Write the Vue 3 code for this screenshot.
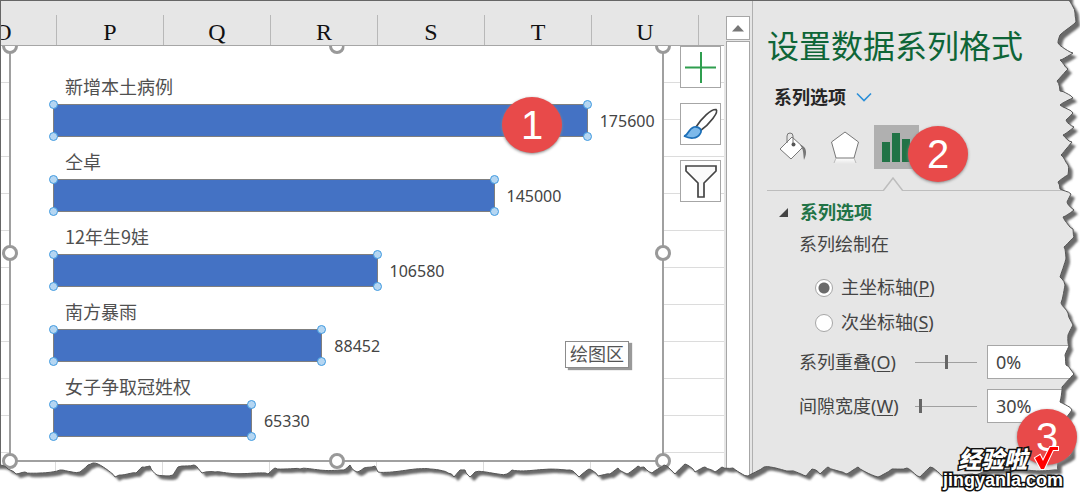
<script setup>
import { ref } from 'vue'

const columns = ['O', 'P', 'Q', 'R', 'S', 'T', 'U']
const axisMax = 200000
const series = [
  { name: '新增本土病例', value: 175600 },
  { name: '仝卓', value: 145000 },
  { name: '12年生9娃', value: 106580 },
  { name: '南方暴雨', value: 88452 },
  { name: '女子争取冠姓权', value: 65330 }
]
const axis = ref('primary')
const overlap = ref('0%')
const gap = ref('30%')
const overlapPos = ref(50)
const gapPos = ref(6)

// Torn paper outline: right side downwards, then the bottom side leftwards.
const right = [
  [1069, 0], [1075, 13], [1076, 22], [1060, 35], [1058, 43], [1073, 53], [1060, 60], [1068, 69],
  [1057, 81], [1060, 91], [1073, 98], [1060, 105], [1073, 113], [1066, 120], [1074, 127], [1063, 135],
  [1072, 142], [1061, 155], [1068, 165], [1068, 175], [1058, 182], [1060, 189], [1071, 194], [1067, 202],
  [1074, 210], [1063, 217], [1073, 229], [1074, 237], [1064, 247], [1066, 258], [1060, 277], [1065, 285],
  [1061, 303], [1068, 313], [1073, 325], [1068, 335], [1069, 346], [1065, 355], [1066, 365], [1074, 374],
  [1062, 387], [1060, 402], [1072, 410], [1066, 418], [1071, 430], [1071, 455], [1058, 462], [1058, 470]
]
const bottom = [
  [0, 465], [8, 469], [16, 474], [25, 472], [40, 473], [60, 470], [80, 472], [88, 465], [93, 463],
  [98, 464], [115, 477], [122, 475], [136, 473], [142, 467], [150, 466], [157, 475], [173, 475],
  [178, 467], [194, 465], [202, 473], [215, 472], [268, 474], [275, 468], [300, 469], [344, 470],
  [350, 465], [357, 472], [364, 468], [375, 466], [378, 472], [430, 469], [448, 473], [454, 477],
  [460, 470], [465, 470], [470, 477], [475, 472], [507, 474], [512, 470], [570, 470], [579, 477],
  [589, 469], [598, 476], [610, 474], [618, 468], [627, 474], [638, 466], [644, 467], [652, 473],
  [664, 465], [675, 474], [685, 464], [695, 472], [705, 467], [715, 472], [722, 467], [733, 468],
  [748, 476], [764, 467], [790, 471], [806, 476], [812, 469], [820, 474], [828, 467], [846, 474],
  [858, 467], [878, 477], [892, 469], [907, 468], [920, 477], [930, 467], [942, 476], [952, 475],
  [975, 475], [990, 470]
]
function rough(points) {
  const out = []
  for (let i = 0; i < points.length - 1; i++) {
    const [x1, y1] = points[i]
    const [x2, y2] = points[i + 1]
    const n = Math.max(1, Math.round(Math.hypot(x2 - x1, y2 - y1) / 3))
    for (let k = 0; k < n; k++) {
      const a = k ? Math.sin((i * 17 + k) * 12.9) : 0
      out.push([(x1 + ((x2 - x1) * k) / n + a * 0.6).toFixed(1), (y1 + ((y2 - y1) * k) / n - a * 0.9).toFixed(1)])
    }
  }
  out.push(points[points.length - 1])
  return out
}
const edge = 'M' + rough([...right, ...[...bottom].reverse()]).map((p) => p.join(' ')).join('L')
const sheetShape = edge + 'L-20 465L-20 -20L1069 -20Z'
const outside = edge + 'L0 496L1080 496L1080 0Z'
</script>

<template>
  <main class="page">
    <div class="window">
      <section class="sheet">
        <div class="headers">
          <span v-for="c in columns" :key="c" class="col">{{ c }}</span>
        </div>
        <div class="cells">
          <div class="chart">
            <i class="handle tl"></i><i class="handle tc"></i><i class="handle tr"></i>
            <i class="handle ml"></i><i class="handle mr"></i>
            <i class="handle bl"></i><i class="handle bc"></i><i class="handle br"></i>
            <ul class="series">
              <li v-for="s in series" :key="s.name">
                <span class="name">{{ s.name }}</span>
                <div class="row">
                  <div class="bar" :style="{ width: (s.value / axisMax) * 100 + '%' }">
                    <i class="dot a"></i><i class="dot b"></i><i class="dot c"></i><i class="dot d"></i>
                  </div>
                  <span class="value">{{ s.value }}</span>
                </div>
              </li>
            </ul>
            <span class="badge one">1</span>
            <div class="tip" role="tooltip">绘图区</div>
          </div>
          <div class="tools">
            <button type="button" class="tool" aria-label="图表元素">
              <svg width="38" height="38" viewBox="0 0 38 38"><path d="M19 4v31M3 19.500h31" stroke="#2f9e4f" stroke-width="2" /></svg>
            </button>
            <button type="button" class="tool" aria-label="图表样式">
              <svg width="38" height="38" viewBox="0 0 38 38">
                <path d="M14 22C20 13 29 4 34 4.500C37 7 28 19 18 26Z" fill="#fff" stroke="#444" stroke-width="1.700" />
                <path d="M2 31C6 31 6 24 12 22C17 21 21 25 18 29C15 34 8 34 2 31Z" fill="#7db9ea" stroke="#1c6fb8" stroke-width="1.700" />
              </svg>
            </button>
            <button type="button" class="tool" aria-label="图表筛选器">
              <svg width="38" height="38" viewBox="0 0 38 38"><path d="M4 4H34V9L22 21V35H16V21L4 9Z" fill="#fafafa" stroke="#444" stroke-width="1.700" /></svg>
            </button>
          </div>
        </div>
      </section>

      <div class="scroll">
        <button type="button" class="up" aria-label="向上滚动">
          <svg width="12" height="7" viewBox="0 0 12 7"><path d="M0 6.500L6 0L12 6.500Z" fill="#777" /></svg>
        </button>
        <div class="track"></div>
      </div>

      <aside class="pane">
        <h1>设置数据系列格式</h1>
        <button type="button" class="picker">
          系列选项
          <svg width="16" height="10" viewBox="0 0 16 10"><path d="M1 1.500L8 8.500L15 1.500" fill="none" stroke="#2b8fd8" stroke-width="1.600" /></svg>
        </button>
        <div class="tabs">
          <button type="button" class="tab" aria-label="填充与线条">
            <svg width="30" height="32" viewBox="0 0 30 32">
              <path d="M2 18L14 6L25 16L13 28Z" fill="#fff" stroke="#777" />
              <path d="M9 12V5Q9 2 12 2Q15 2 15 5V13" fill="none" stroke="#777" />
              <circle cx="15.500" cy="13.500" r="2" fill="#555" />
              <path d="M22 14C28 15 30 21 26 29C25 23 26 19 22 14Z" fill="#777" />
            </svg>
          </button>
          <button type="button" class="tab" aria-label="效果">
            <svg width="30" height="34" viewBox="0 0 30 34">
              <defs><linearGradient id="fade" x1="0" y1="0" x2="0" y2="1"><stop offset="0" stop-color="#fff" /><stop offset="1" stop-color="#fff" stop-opacity="0" /></linearGradient></defs>
              <path d="M6 28H24L26 34H4Z" fill="url(#fade)" />
              <path d="M15 2L28.500 12L24 28H6L1.500 12Z" fill="#fff" stroke="#777" />
              <path d="M6 28L4 33M24 28L26 33" stroke="#bbb" />
            </svg>
          </button>
          <button type="button" class="tab selected" aria-label="系列选项">
            <svg width="29" height="30" viewBox="0 0 29 30"><path d="M0 10H8V30H0ZM10 1H18V30H10ZM20 7H28V30H20Z" fill="#217346" /></svg>
          </button>
          <span class="badge two">2</span>
        </div>
        <div class="divider">
          <svg width="20" height="14" viewBox="0 0 20 14"><path d="M0 14L10 1L20 14" fill="#e6e6e6" stroke="#bdbdbd" stroke-width="1.500" /></svg>
        </div>
        <h2>
          <svg width="9" height="9" viewBox="0 0 9 9"><path d="M9 0V9H0Z" fill="#444" /></svg>
          系列选项
        </h2>
        <fieldset>
          <legend>系列绘制在</legend>
          <label class="radio"><input v-model="axis" type="radio" name="axis" value="primary" /><span>主坐标轴(<u>P</u>)</span></label>
          <label class="radio"><input v-model="axis" type="radio" name="axis" value="secondary" /><span>次坐标轴(<u>S</u>)</span></label>
        </fieldset>
        <div class="setting">
          <label for="overlap">系列重叠(<u>O</u>)</label>
          <input v-model="overlapPos" type="range" min="0" max="100" aria-label="系列重叠滑块" />
          <input id="overlap" v-model="overlap" type="text" />
        </div>
        <div class="setting">
          <label for="gap">间隙宽度(<u>W</u>)</label>
          <input v-model="gapPos" type="range" min="0" max="100" aria-label="间隙宽度滑块" />
          <input id="gap" v-model="gap" type="text" />
        </div>
      </aside>
    </div>

    <svg class="torn" viewBox="0 0 1080 496" preserveAspectRatio="none" aria-hidden="true">
      <defs>
        <clipPath id="out"><path :d="outside" /></clipPath>
        <filter id="soft" x="-5%" y="-5%" width="110%" height="110%"><feGaussianBlur stdDeviation="1" /></filter>
      </defs>
      <path :d="outside" fill="#fff" />
      <g clip-path="url(#out)">
        <path :d="sheetShape" fill="#6a6a6a" filter="url(#soft)" transform="translate(4 4)" />
      </g>
      <path :d="edge" fill="none" stroke="#555" stroke-width="1" />
    </svg>
    <span class="badge three">3</span>
    <div class="mark">
      <div class="brand">
        经验啦
        <svg width="26" height="26" viewBox="0 0 26 26">
          <path d="M2 13L7 10L10 16L17 2H25V5H20L11 24H8Z" fill="#f00" stroke="#fff" stroke-width="2" paint-order="stroke" />
        </svg>
      </div>
      <div class="site">jingyanla.com</div>
    </div>
  </main>
</template>

<style>
body {
  margin: 0;
  background: #fff;
}
</style>

<style scoped>
* {
  box-sizing: border-box;
}
.page {
  position: relative;
  overflow: hidden;
  padding-bottom: 14px;
  font-family: "Noto Sans", "Noto Sans CJK SC", sans-serif;
  color: #444;
}
button {
  padding: 0;
  border: 0;
  background: none;
  font: inherit;
  color: inherit;
}
.window {
  display: flex;
  border-top: 1px solid #666;
  border-left: 1px solid #666;
  background: #e6e6e6;
}
.sheet {
  flex: 1;
  min-width: 0;
  display: flex;
  flex-direction: column;
}
.headers {
  display: flex;
  height: 45px;
  padding-top: 14px;
  margin-right: 2px;
  border-bottom: 1px solid #a6a6a6;
  overflow: hidden;
}
.col {
  flex: none;
  width: 107px;
  border-right: 1px solid #b8b8b8;
  text-align: center;
  font: 24px/34px "Liberation Serif", serif;
  color: #111;
}
.col:first-child {
  margin-left: -51px;
}
.cells {
  flex: 1;
  display: flex;
  padding: 0 0 20px 8px;
  background:
    repeating-linear-gradient(to bottom, transparent 0 36px, #dcdcdc 36px 37px),
    repeating-linear-gradient(to right, transparent 0 106px, #dcdcdc 106px 107px) -52px 0,
    #fff;
  margin-right: 2px;
  overflow: hidden;
}
.chart {
  position: relative;
  flex: 1;
  padding: 28px 0 23px 42px;
  border: solid #a0a0a0;
  border-width: 0 2px 2px 2px;
  background: #fff;
}
.handle {
  position: absolute;
  width: 16px;
  height: 16px;
  border: 3px solid #999;
  border-radius: 50%;
  background: #fff;
}
.tl, .tc, .tr {
  top: -8px;
  clip-path: inset(8px 0 0 0);
}
.ml, .mr {
  top: calc(50% - 8px);
}
.bl, .bc, .br {
  bottom: -9px;
}
.tl, .ml, .bl {
  left: -9px;
}
.tr, .mr, .br {
  right: -9px;
}
.tc, .bc {
  left: calc(50% - 8px);
}
.series {
  display: grid;
  gap: 12px;
  margin: 0;
  padding: 0;
  list-style: none;
}
.name {
  display: block;
  padding-left: 12px;
  margin-bottom: 6px;
  font: 18px/24px "Noto Sans CJK SC", sans-serif;
  color: #505050;
}
.row {
  display: flex;
  align-items: center;
  gap: 12px;
}
.bar {
  position: relative;
  height: 33px;
  border: 1px solid #7f7f7f;
  background: #4472c4;
}
.dot {
  position: absolute;
  width: 9px;
  height: 9px;
  border: 1px solid #419be0;
  border-radius: 50%;
  background: #b5d6f2;
}
.a, .b {
  left: -5px;
}
.c, .d {
  right: -5px;
}
.a, .c {
  top: -5px;
}
.b, .d {
  bottom: -5px;
}
.value {
  font-size: 16px;
  line-height: 24px;
}
.badge {
  position: absolute;
  width: 60px;
  height: 56px;
  border-radius: 50%;
  background: #e84a4a;
  box-shadow: 0 1px 3px #888;
  color: #fff;
  text-align: center;
  font: 40px/56px "Liberation Sans", sans-serif;
}
.one {
  top: 51px;
  right: 100px;
}
.tip {
  position: absolute;
  right: 33px;
  bottom: 92px;
  padding: 0 4px;
  border: 1px solid #8c8c8c;
  background: #fff;
  box-shadow: 3px 2px 1px #999;
  font-size: 18px;
  line-height: 25px;
  color: #555;
}
.tools {
  display: flex;
  flex-direction: column;
  gap: 15px;
  width: 60px;
  padding-left: 16px;
}
.tool {
  display: grid;
  place-items: center;
  width: 41px;
  height: 42px;
  border: 1px solid #a6a6a6;
  background: #fff;
}
.scroll {
  display: flex;
  flex-direction: column;
  gap: 1px;
  width: 24px;
  padding-top: 15px;
}
.up {
  display: grid;
  place-items: center;
  height: 24px;
  border: 1px solid #a6a6a6;
  background: #fff;
}
.track {
  flex: 1;
  border: 1px solid #a6a6a6;
  background: #fff;
}
.pane {
  width: 328px;
  margin-left: 2px;
  padding: 20px 0 0 14px;
  border-left: 1px solid #b0b0b0;
}
h1 {
  margin: 0;
  font-size: 32px;
  line-height: 50px;
  font-weight: 400;
  color: #0e6537;
}
.picker {
  display: flex;
  align-items: center;
  gap: 10px;
  margin: 12px 0 14px 7px;
  font-size: 18px;
  line-height: 28px;
  font-weight: 700;
  color: #262626;
}
.tabs {
  position: relative;
  display: flex;
  align-items: center;
  gap: 7px;
  height: 44px;
  padding-left: 3px;
}
.tab {
  display: grid;
  place-items: center;
  width: 45px;
  height: 44px;
}
.selected {
  background: #b0b0b0;
}
.two {
  left: 141px;
  top: 1px;
}
.divider {
  display: flex;
  height: 14px;
  margin-top: 8px;
  padding-left: 116px;
  background: linear-gradient(#bdbdbd, #bdbdbd) left bottom / 100% 1px no-repeat;
}
h2 {
  display: flex;
  align-items: center;
  gap: 12px;
  margin: 7px 0 4px 12px;
  font-size: 18px;
  line-height: 28px;
  color: #217346;
}
fieldset {
  margin: 0 0 5px 32px;
  padding: 0;
  border: 0;
}
legend {
  margin-bottom: 12px;
  padding: 0;
  font-size: 18px;
  line-height: 28px;
}
.radio {
  display: flex;
  align-items: center;
  gap: 8px;
  margin-left: 16px;
  font-size: 18px;
  line-height: 35px;
}
.radio input {
  appearance: none;
  width: 18px;
  height: 18px;
  margin: 0;
  border: 1px solid #a6a6a6;
  border-radius: 50%;
  background: #fff;
}
.radio input:checked {
  background: radial-gradient(circle, #6a6a6a 5px, #fff 6px);
}
u {
  text-underline-offset: 2px;
}
.setting {
  display: flex;
  align-items: center;
  margin-left: 32px;
  margin-bottom: 10px;
}
.setting label {
  width: 116px;
  font-size: 18px;
  line-height: 34px;
  white-space: nowrap;
}
.setting input[type="range"] {
  appearance: none;
  width: 62px;
  height: 14px;
  margin: 0 10px 0 0;
  background: linear-gradient(#a0a0a0, #a0a0a0) center / 100% 1px no-repeat;
}
.setting input[type="range"]::-webkit-slider-thumb {
  appearance: none;
  width: 3px;
  height: 14px;
  background: #666;
}
.setting input[type="text"] {
  flex: 1;
  min-width: 0;
  height: 34px;
  padding: 0 8px;
  border: 1px solid #a6a6a6;
  border-radius: 0;
  background: #fff;
  font: 18px "Noto Sans", sans-serif;
  color: #444;
}
.torn {
  position: absolute;
  inset: 0;
  width: 100%;
  height: 100%;
  pointer-events: none;
}
.three {
  right: 3px;
  bottom: 31px;
}
.mark {
  position: absolute;
  right: 17px;
  bottom: 6px;
  color: #fff;
  -webkit-text-stroke: 3px #111;
  paint-order: stroke fill;
}
.brand {
  display: flex;
  align-items: center;
  justify-content: flex-end;
  gap: 6px;
  height: 24px;
  padding-right: 4px;
  font: italic 900 23px/24px "Noto Sans CJK SC", sans-serif;
}
.site {
  font: 700 18px/20px "Liberation Sans", sans-serif;
}
</style>
